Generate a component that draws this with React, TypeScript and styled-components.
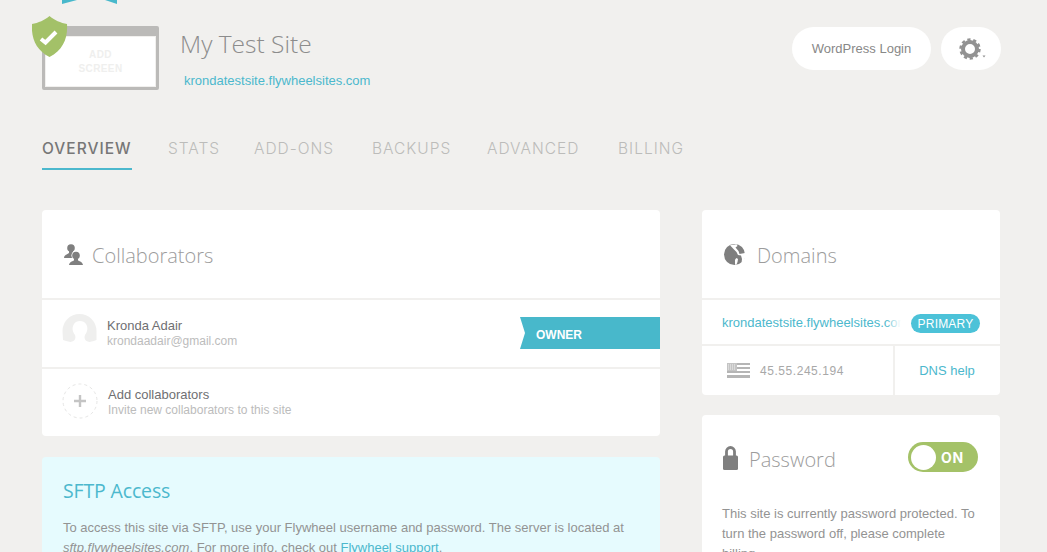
import React from "react"
import styled, { createGlobalStyle } from "styled-components"

const GlobalStyle = createGlobalStyle`
  html, body {
    margin: 0;
    padding: 0;
    background: #f1f0ee;
    height: 552px;
    overflow: hidden;
  }
  * {
    box-sizing: border-box;
  }
`

const Page = styled.div`
  position: relative;
  width: 1047px;
  height: 552px;
  overflow: hidden;
  padding: 26px 46px 0 42px;
  font-family: "Liberation Sans", Arial, sans-serif;
`

const TopMark = styled.svg`
  position: absolute;
  left: 60px;
  top: 0;
`

const Header = styled.header`
  display: flex;
  align-items: flex-start;
  height: 64px;
`

const Thumb = styled.div`
  position: relative;
  width: 117px;
  height: 64px;
  flex: none;
  background: #fff;
  border: 3px solid #bbbab8;
  border-top-width: 10px;
  border-radius: 2px;
  box-shadow: inset 0 0 0 1px #f1f0ee;
  display: flex;
  flex-direction: column;
  align-items: center;
  justify-content: center;
  padding-top: 1px;
  color: #efefee;
  font-size: 10px;
  font-weight: 700;
  line-height: 14px;
  letter-spacing: 0.4px;
`

const Shield = styled.svg`
  position: absolute;
  left: -13px;
  top: -20px;
`

const SiteInfo = styled.div`
  margin-left: 21px;
`

const SiteName = styled.h1`
  margin: 1px 0 0;
  font-family: "Open Sans", sans-serif;
  font-weight: 300;
  font-size: 24.5px;
  line-height: 34px;
  color: #8c8c8c;
`

const SiteUrl = styled.a`
  display: block;
  margin: 12px 0 0 4px;
  font-size: 13px;
  line-height: 16px;
  color: #4cb8cd;
`

const HeaderActions = styled.div`
  margin-left: auto;
  margin-top: 1px;
  display: flex;
  gap: 10px;
`

const PillButton = styled.button<{ $width: number }>`
  width: ${({ $width }) => $width}px;
  height: 43px;
  border: 0;
  border-radius: 22px;
  background: #fff;
  color: #888;
  font-family: "Liberation Sans", Arial, sans-serif;
  font-size: 13px;
  display: flex;
  align-items: center;
  justify-content: center;
  padding: 0;
`

const Tabs = styled.nav`
  display: flex;
  gap: 36px;
  margin-top: 46px;
`

const Tab = styled.a<{ $width: number; $active?: boolean }>`
  display: block;
  flex: none;
  width: ${({ $width }) => $width}px;
  height: 34px;
  padding-top: 4px;
  font-family: "Inter", sans-serif;
  font-size: 15.5px;
  line-height: 18px;
  letter-spacing: 1px;
  font-weight: ${({ $active }) => ($active ? 500 : 300)};
  color: ${({ $active }) => ($active ? "#777" : "#bcbcba")};
  border-bottom: 2px solid ${({ $active }) => ($active ? "#4cb8cd" : "transparent")};
  white-space: nowrap;
`

const Columns = styled.div`
  display: grid;
  grid-template-columns: 618px 298px;
  gap: 42px;
  margin-top: 40px;
`

const Column = styled.div`
  display: flex;
  flex-direction: column;
`

const Card = styled.section<{ $gap?: number }>`
  background: #fff;
  border-radius: 4px;
  margin-bottom: ${({ $gap }) => $gap ?? 0}px;
`

const CardHead = styled.div<{ $gap: number }>`
  height: 88px;
  display: flex;
  align-items: center;
  padding-left: 22px;
  gap: ${({ $gap }) => $gap}px;
`

const CardTitle = styled.h2`
  margin: 4px 0 0;
  font-family: "Open Sans", sans-serif;
  font-weight: 300;
  font-size: 20px;
  line-height: 28px;
  color: #9c9c9c;
`

const Person = styled.div<{ $height: number }>`
  position: relative;
  height: ${({ $height }) => $height}px;
  border-top: 2px solid #f1f0ee;
  display: flex;
  align-items: center;
  padding-left: 20px;
  gap: 10px;
`

const PersonText = styled.div`
  display: flex;
  flex-direction: column;
  padding-bottom: 1px;
`

const PersonName = styled.span`
  font-size: 13px;
  line-height: 16px;
  color: #6f6f72;
`

const PersonMeta = styled.span`
  font-size: 12px;
  line-height: 14px;
  color: #bcbcbc;
`

const OwnerRibbon = styled.div`
  position: absolute;
  right: 0;
  top: 17px;
  width: 140px;
  height: 32px;
  background: #48b8cb;
  clip-path: polygon(0 0, 100% 0, 100% 100%, 0 100%, 5px 50%);
  color: #fff;
  font-size: 12px;
  font-weight: 700;
  line-height: 37px;
  padding-left: 16px;
`

const SftpCard = styled(Card)`
  background: #e6fbfe;
  padding: 20px 21px 0;
  height: 200px;
`

const SftpTitle = styled.h2`
  margin: 0;
  font-family: "Open Sans", sans-serif;
  font-weight: 400;
  font-size: 19.5px;
  line-height: 28px;
  letter-spacing: -0.15px;
  color: #4cb8cd;
`

const Paragraph = styled.p`
  margin: 13px 0 0;
  font-size: 13px;
  line-height: 20px;
  color: #939393;
`

const TextLink = styled.a`
  color: #4cb8cd;
`

const DomainRow = styled.div`
  height: 46px;
  border-top: 2px solid #f1f0ee;
  display: flex;
  align-items: center;
  padding-left: 20px;
`

const DomainName = styled.a`
  position: relative;
  width: 179px;
  overflow: hidden;
  white-space: nowrap;
  font-size: 13px;
  color: #4cb8cd;
  margin-top: 1px;
  &::after {
    content: "";
    position: absolute;
    top: 0;
    right: 0;
    width: 16px;
    height: 100%;
    background: linear-gradient(to right, rgba(255, 255, 255, 0), #fff);
  }
`

const PrimaryBadge = styled.span`
  margin: 3px 0 0 10px;
  width: 69px;
  height: 19px;
  border-radius: 10px;
  background: #4cc2d8;
  color: #fff;
  font-size: 12px;
  line-height: 20px;
  text-align: center;
  letter-spacing: 0.2px;
`

const IpRow = styled.div`
  height: 51px;
  border-top: 2px solid #f1f0ee;
  display: flex;
`

const IpCell = styled.div`
  width: 193px;
  display: flex;
  align-items: center;
  padding-left: 25px;
  gap: 10px;
  border-right: 2px solid #f1f0ee;
  font-size: 12px;
  letter-spacing: 0.55px;
  color: #a8a8a8;
`

const HelpCell = styled.a`
  flex: 1;
  display: flex;
  align-items: center;
  justify-content: center;
  padding-right: 1px;
  font-size: 13px;
  color: #4cb8cd;
`

const PasswordHead = styled.div`
  height: 82px;
  display: flex;
  align-items: center;
  padding: 4px 22px 0 21px;
  gap: 11px;
`

const Toggle = styled.div`
  margin-left: auto;
  margin-top: -2px;
  width: 70px;
  height: 30px;
  border-radius: 15px;
  background: #a4c268;
  display: flex;
  align-items: center;
  padding: 0 3px;
  gap: 5px;
  color: #fff;
  font-family: "Inter", sans-serif;
  font-size: 14px;
  font-weight: 700;
  letter-spacing: 0.8px;
`

const Knob = styled.span`
  width: 25px;
  height: 25px;
  border-radius: 50%;
  background: #fff;
`

const PasswordText = styled(Paragraph)`
  margin: 0;
  padding: 7px 20px 0;
`

const PeopleIcon = () => (
  <svg width="19" height="21" viewBox="0 0 19 21">
    <circle cx="7" cy="4" r="3.8" fill="#7f7f7f" />
    <path d="M5 7h4v2l3 2-4 3H0c0-3 3-3.500 5-5z" fill="#7f7f7f" />
    <circle cx="12" cy="11.500" r="4.600" fill="#fff" />
    <path d="M10 15h4v1.500c2 1 4.500 1.500 5 4.500H5c.5-3 3-3.500 5-4.500z" fill="#7f7f7f" />
    <circle cx="12" cy="11.500" r="3.800" fill="#7f7f7f" />
  </svg>
)

const GlobeIcon = () => (
  <svg width="21" height="21" viewBox="0 0 21 21">
    <circle cx="10.5" cy="10.5" r="10.5" fill="#7f7f7f" />
    <path d="M6 1.200l6.500-1 1 1.800-2 1.500 3 3.500 1 3 5.500-1 .5 3.500-1.500 4-2.500 2.500.5-4-1-3.500-3-.5-1.500-3-3-3z" fill="#fff" />
    <path d="M11 15.500l1.500-1.500 1.500 1-.5 3-1 2.500-1.500.3z" fill="#fff" />
  </svg>
)

const LockIcon = () => (
  <svg width="15" height="24" viewBox="0 0 15 24">
    <path d="M3.500 11V5.500a4 4 0 0 1 8 0V11" fill="none" stroke="#7f7f7f" strokeWidth="2.8" />
    <rect x="0" y="9.500" width="15" height="14.500" rx="1.500" fill="#7f7f7f" />
  </svg>
)

const GearIcon = () => (
  <svg width="30" height="24" viewBox="0 0 30 24">
    <circle cx="14" cy="12" r="7" fill="none" stroke="#929292" strokeWidth="4" />
    <circle cx="14" cy="12" r="9.5" fill="none" stroke="#929292" strokeWidth="2.4" strokeDasharray="3.2 2.77" />
    <path d="M26.500 18.500h3l-1.500 2z" fill="#929292" />
  </svg>
)

const Avatar = () => (
  <svg width="35" height="40" viewBox="0 0 35 40">
    <path
      d="M.5 17a17 17 0 0 1 34 0v9q-2 1-7 2c-5-1-5.500-4-4.500-7 3-4 3-8 1-11-2-4-10-4-12 0-2 3-2 7 1 11 1 3 .5 6-4.500 7q-5-1-7.500-2z"
      fill="#efefee"
    />
  </svg>
)

const AddAvatar = () => (
  <svg width="36" height="39" viewBox="0 0 36 39">
    <circle cx="18" cy="18" r="17" fill="none" stroke="#e6e6e5" strokeWidth="1" strokeDasharray="3 3" />
    <path d="M18 12v12M12 18h12" stroke="#c4c4c4" strokeWidth="2.4" />
  </svg>
)

const FlagIcon = () => (
  <svg width="23" height="15" viewBox="0 0 23 15">
    <rect y="0" width="23" height="2" fill="#b5b5b5" />
    <rect y="4" width="23" height="2" fill="#b5b5b5" />
    <rect y="8" width="23" height="2" fill="#b5b5b5" />
    <rect y="12" width="23" height="3" fill="#b5b5b5" />
    <rect width="10" height="8" fill="#c4c4c4" />
    <path d="M1 2h8M1 4h8M1 6h8" stroke="#f0f0f0" strokeWidth="1" strokeDasharray="1 1" />
  </svg>
)

const App: React.FC = () => {
  return (
    <Page>
      <GlobalStyle />
      <TopMark width="60" height="5" viewBox="0 0 60 5">
        <path d="M2 4L17 0H2zM45 0h12v4z" fill="#48b8cb" />
      </TopMark>
      <Header>
        <Thumb>
          <Shield width="36" height="41" viewBox="0 0 36 41">
            <path d="M17.500 0C22 4 29 7 35 8c1 14-4 26-17.500 33C4 34-1 22 0 8 6 7 13 4 17.500 0z" fill="#a3c168" />
            <path d="M9 23l4.500 3.500L24 16" fill="none" stroke="#fff" strokeWidth="4" />
          </Shield>
          <span>ADD</span>
          <span>SCREEN</span>
        </Thumb>
        <SiteInfo>
          <SiteName>My Test Site</SiteName>
          <SiteUrl>krondatestsite.flywheelsites.com</SiteUrl>
        </SiteInfo>
        <HeaderActions>
          <PillButton $width={139}>WordPress Login</PillButton>
          <PillButton $width={60}>
            <GearIcon />
          </PillButton>
        </HeaderActions>
      </Header>

      <Tabs>
        <Tab $width={90} $active>OVERVIEW</Tab>
        <Tab $width={50}>STATS</Tab>
        <Tab $width={82}>ADD-ONS</Tab>
        <Tab $width={79}>BACKUPS</Tab>
        <Tab $width={95}>ADVANCED</Tab>
        <Tab $width={64}>BILLING</Tab>
      </Tabs>

      <Columns>
        <Column>
          <Card $gap={21}>
            <CardHead $gap={9}>
              <PeopleIcon />
              <CardTitle>Collaborators</CardTitle>
            </CardHead>
            <Person $height={69}>
              <Avatar />
              <PersonText>
                <PersonName>Kronda Adair</PersonName>
                <PersonMeta>krondaadair@gmail.com</PersonMeta>
              </PersonText>
              <OwnerRibbon>OWNER</OwnerRibbon>
            </Person>
            <Person $height={69}>
              <AddAvatar />
              <PersonText>
                <PersonName>Add collaborators</PersonName>
                <PersonMeta>Invite new collaborators to this site</PersonMeta>
              </PersonText>
            </Person>
          </Card>
          <SftpCard>
            <SftpTitle>SFTP Access</SftpTitle>
            <Paragraph>
              To access this site via SFTP, use your Flywheel username and password. The server is located at{" "}
              <em>sftp.flywheelsites.com</em>. For more info, check out <TextLink>Flywheel support</TextLink>.
            </Paragraph>
          </SftpCard>
        </Column>

        <Column>
          <Card $gap={20}>
            <CardHead $gap={12}>
              <GlobeIcon />
              <CardTitle>Domains</CardTitle>
            </CardHead>
            <DomainRow>
              <DomainName>krondatestsite.flywheelsites.com</DomainName>
              <PrimaryBadge>PRIMARY</PrimaryBadge>
            </DomainRow>
            <IpRow>
              <IpCell>
                <FlagIcon />
                45.55.245.194
              </IpCell>
              <HelpCell>DNS help</HelpCell>
            </IpRow>
          </Card>
          <Card>
            <PasswordHead>
              <LockIcon />
              <CardTitle>Password</CardTitle>
              <Toggle>
                <Knob />
                ON
              </Toggle>
            </PasswordHead>
            <PasswordText>
              This site is currently password protected. To turn the password off, please complete billing.
            </PasswordText>
          </Card>
        </Column>
      </Columns>
    </Page>
  )
}

export default App
